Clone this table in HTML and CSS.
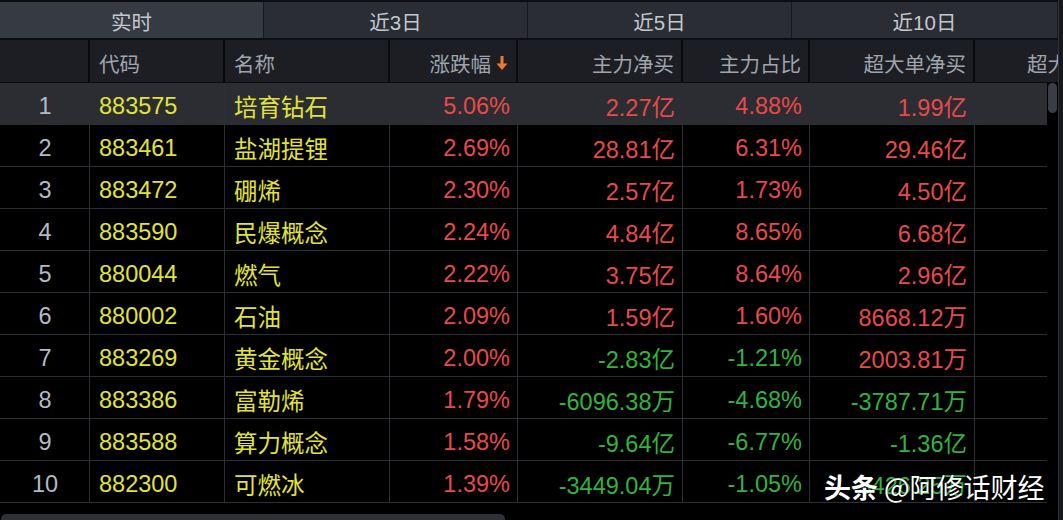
FILE: index.html
```html
<!DOCTYPE html>
<html lang="zh">
<head>
<meta charset="utf-8">
<link rel="stylesheet" href="styles.css">
</head>
<body>
<div class="screen">
  <div class="main">
    <div class="tabs">
      <div class="tab active">实时</div>
      <div class="tab">近3日</div>
      <div class="tab">近5日</div>
      <div class="tab">近10日</div>
    </div>
    <div class="row head">
      <div class="c"></div>
      <div class="c l">代码</div>
      <div class="c l">名称</div>
      <div class="c r">涨跌幅<svg class="arrow" width="12" height="16" viewBox="0 0 12 16"><path d="M6 1v9" stroke="#ee7a2b" stroke-width="3" fill="none"/><path d="M0.5 8.5l5.5 6.5 5.5-6.5z" fill="#ee7a2b"/></svg></div>
      <div class="c r">主力净买</div>
      <div class="c r">主力占比</div>
      <div class="c r">超大单净买</div>
      <div class="c cut">超大</div>
    </div>
    <div class="body">
      <div class="table">
        <div class="row sel">
          <div class="c idx">1</div><div class="c l code">883575</div><div class="c l name">培育钻石</div>
          <div class="c r up">5.06%</div><div class="c r up">2.27亿</div><div class="c r up">4.88%</div><div class="c r up">1.99亿</div><div class="c"></div>
        </div>
        <div class="row">
          <div class="c idx">2</div><div class="c l code">883461</div><div class="c l name">盐湖提锂</div>
          <div class="c r up">2.69%</div><div class="c r up">28.81亿</div><div class="c r up">6.31%</div><div class="c r up">29.46亿</div><div class="c"></div>
        </div>
        <div class="row">
          <div class="c idx">3</div><div class="c l code">883472</div><div class="c l name">硼烯</div>
          <div class="c r up">2.30%</div><div class="c r up">2.57亿</div><div class="c r up">1.73%</div><div class="c r up">4.50亿</div><div class="c"></div>
        </div>
        <div class="row">
          <div class="c idx">4</div><div class="c l code">883590</div><div class="c l name">民爆概念</div>
          <div class="c r up">2.24%</div><div class="c r up">4.84亿</div><div class="c r up">8.65%</div><div class="c r up">6.68亿</div><div class="c"></div>
        </div>
        <div class="row">
          <div class="c idx">5</div><div class="c l code">880044</div><div class="c l name">燃气</div>
          <div class="c r up">2.22%</div><div class="c r up">3.75亿</div><div class="c r up">8.64%</div><div class="c r up">2.96亿</div><div class="c"></div>
        </div>
        <div class="row">
          <div class="c idx">6</div><div class="c l code">880002</div><div class="c l name">石油</div>
          <div class="c r up">2.09%</div><div class="c r up">1.59亿</div><div class="c r up">1.60%</div><div class="c r up">8668.12万</div><div class="c"></div>
        </div>
        <div class="row">
          <div class="c idx">7</div><div class="c l code">883269</div><div class="c l name">黄金概念</div>
          <div class="c r up">2.00%</div><div class="c r dn">-2.83亿</div><div class="c r dn">-1.21%</div><div class="c r up">2003.81万</div><div class="c"></div>
        </div>
        <div class="row">
          <div class="c idx">8</div><div class="c l code">883386</div><div class="c l name">富勒烯</div>
          <div class="c r up">1.79%</div><div class="c r dn">-6096.38万</div><div class="c r dn">-4.68%</div><div class="c r dn">-3787.71万</div><div class="c"></div>
        </div>
        <div class="row">
          <div class="c idx">9</div><div class="c l code">883588</div><div class="c l name">算力概念</div>
          <div class="c r up">1.58%</div><div class="c r dn">-9.64亿</div><div class="c r dn">-6.77%</div><div class="c r dn">-1.36亿</div><div class="c"></div>
        </div>
        <div class="row">
          <div class="c idx">10</div><div class="c l code">882300</div><div class="c l name">可燃冰</div>
          <div class="c r up">1.39%</div><div class="c r dn">-3449.04万</div><div class="c r dn">-1.05%</div><div class="c r dn">-3426.25万</div><div class="c"></div>
        </div>
        <div class="hscroll"><div class="hthumb"></div></div>
      </div>
      <div class="vscroll"><div class="vthumb"></div></div>
    </div>
  </div>
  <div class="edge"></div>
  <div class="mark"><b>头条</b> @阿修话财经</div>
</div>
</body>
</html>
```

FILE: styles.css
```css
* { box-sizing: border-box; margin: 0; padding: 0; }
html, body { background: #000; }
body {
  font-family: "Liberation Sans", "Noto Sans CJK SC", sans-serif;
  width: 1063px;
  height: 520px;
  overflow: hidden;
}
.screen {
  position: relative;
  display: flex;
  width: 1063px;
  height: 520px;
  overflow: hidden;
  background: #000;
}
.main {
  width: 1058px;
  display: flex;
  flex-direction: column;
  overflow: hidden;
}
.tabs {
  display: grid;
  grid-template-columns: 264px 264px 264px 266px;
  height: 40px;
  flex-shrink: 0;
  padding-top: 2px;
  padding-bottom: 2px;
  background: #0c0d10;
}
.tab {
  background: #2a2d34;
  color: #c3c7ce;
  font-size: 20.5px;
  display: flex;
  align-items: center;
  justify-content: center;
  border-right: 1px solid #17191d;
  padding-top: 2px;
}
.tab.active { background: #363a43; }
.body {
  display: flex;
  flex: 1;
}
.table {
  width: 1047px;
  display: flex;
  flex-direction: column;
}
.row {
  display: grid;
  grid-template-columns: 90px 135px 165px 128px 165px 127px 165px 72px;
  height: 42px;
  flex-shrink: 0;
  border-bottom: 1px solid #2c2f35;
  font-size: 23.5px;
}
.row .c { padding-top: 5px; }
.row.head {
  grid-template-columns: 90px 135px 165px 128px 165px 127px 165px 83px;
  width: 1058px;
  height: 43px;
  background: #1c1e23;
  border-bottom: 1px solid #0a0a0c;
  font-size: 20.5px;
  color: #9fa4ad;
}
.row.head .c { border-right: 2px solid #0a0a0c; padding-top: 3px; }
.row.sel { background: #2b2d32; }
.c {
  display: flex;
  align-items: center;
  border-right: 1px solid #2c2f35;
  white-space: nowrap;
  overflow: hidden;
}
.c.l { justify-content: flex-start; padding-left: 9px; }
.c.r { justify-content: flex-end; padding-right: 7px; }
.row.head .c.cut {
  justify-content: flex-start;
  padding-left: 52px;
  border-right: none;
}
.row .c:last-child { border-right: none; }
.idx { justify-content: center; color: #b4bac4; padding-left: 1px; }
.code { color: #e2e33a; }
.name { color: #e2e33a; }
.up { color: #e84a4a; }
.dn { color: #30b43f; }
.arrow { margin-left: 5px; margin-right: 1px; }
.hscroll {
  flex: 1;
  display: flex;
  align-items: flex-end;
}
.hthumb {
  width: 504px;
  height: 6px;
  margin-left: 1px;
  background: #2e3036;
  border-radius: 5px 5px 0 0;
}
.vscroll {
  width: 11px;
  padding-left: 1px;
  background: #000;
}
.vthumb {
  width: 9px;
  height: 30px;
  background: #3a3d45;
  border-radius: 5px;
}
.edge {
  width: 5px;
  background: #17181b;
  border-left: 1px solid #2e3036;
}
.mark {
  position: absolute;
  left: 824px;
  top: 468px;
  color: #fff;
  font-family: "Noto Sans CJK SC", sans-serif;
  font-size: 27px;
  line-height: 38px;
  text-shadow: 0 0 2px rgba(0,0,0,0.6);
}
.mark b { font-weight: 700; }
```
